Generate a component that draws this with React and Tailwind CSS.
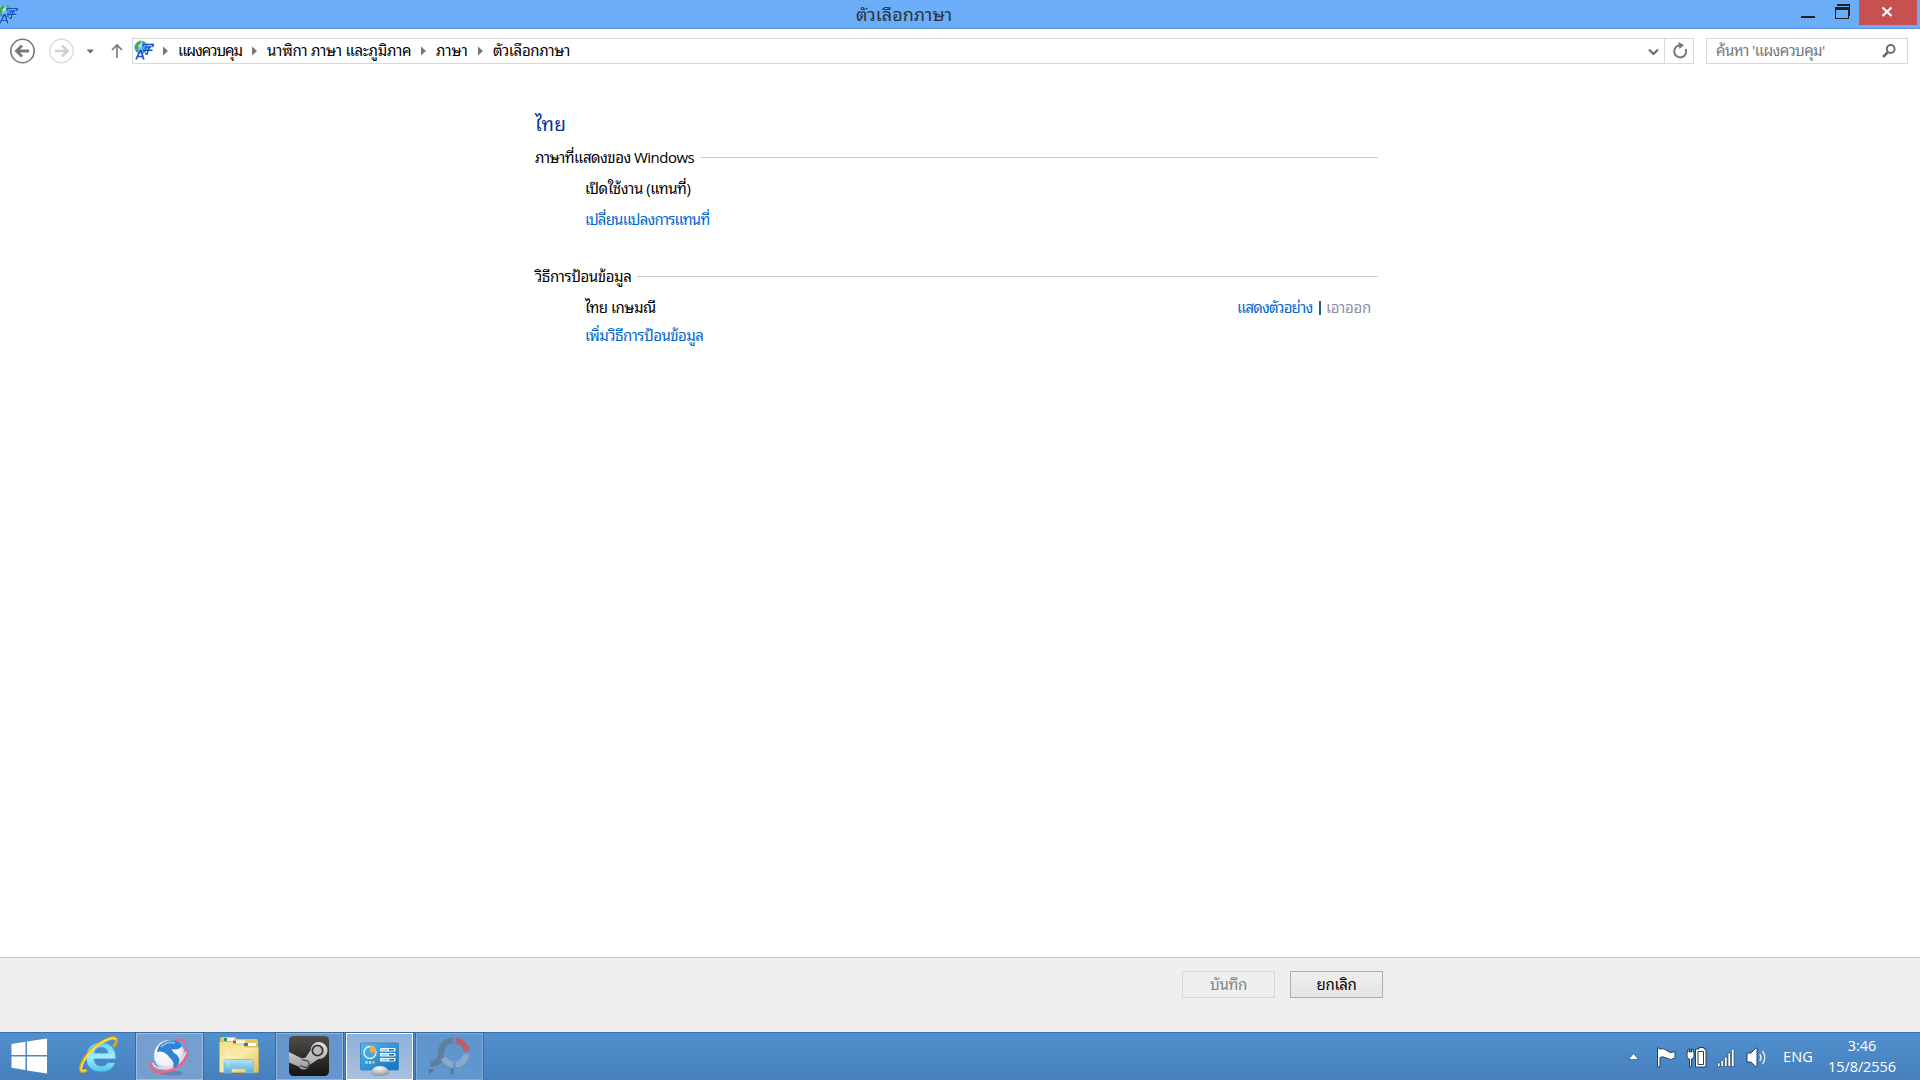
const LanguageIcon = () => (
  <svg viewBox="0 0 20 20" className="h-5 w-5 shrink-0">
    <defs>
      <radialGradient id="globe" cx="35%" cy="30%" r="75%">
        <stop offset="0" stopColor="#e2f9ff" />
        <stop offset="0.5" stopColor="#58b2ea" />
        <stop offset="1" stopColor="#0b4fa8" />
      </radialGradient>
    </defs>
    <circle cx="7" cy="7.2" r="6.6" fill="url(#globe)" />
    <path d="M0.800 7 Q2 2 6 1 L7 3 L4.500 5.500 L4 9 L2 10Z M9 1.200 L12 3 L10.500 4.500 L8 4Z" fill="#3fae45" />
    <g fill="none">
      <path d="M9 7V4.500H19.500L18.500 7 M11 7H16.500L14 9.300 M8.500 10.200H18.500 M14 9.300L13.300 13.500L11 13.300" stroke="#cfe9ff" strokeWidth="2.400" opacity=".5" />
      <path d="M9 7V4.500H19.500L18.500 7 M11 7H16.500L14 9.300 M8.500 10.200H18.500 M14 9.300L13.300 14L11 13.800" stroke="#1650cc" strokeWidth="1.400" />
      <path d="M2 19.500L6.200 10.500H7L9.800 19.500 M3.800 16.500H9" stroke="#e8f6ff" strokeWidth="2.800" opacity=".5" />
      <path d="M2 19.500L6.200 10.500H7L9.800 19.500 M3.800 16.500H9" stroke="#1554d1" strokeWidth="1.700" />
    </g>
  </svg>
);

const TitleBar = () => (
  <header className="flex h-[29px] items-start border-b border-[#5a91d6] bg-[#6badf6]">
    <div className="-ml-0.5 w-[858px] pt-[4px]">
      <LanguageIcon />
    </div>
    <h1 className="w-[96px] whitespace-nowrap pt-[2px] text-[18px] leading-6 text-[#2b3442]">ตัวเลือกภาษา</h1>
    <div className="ml-auto flex pr-[3px]">
      <svg className="h-7 w-[58px]" viewBox="0 0 58 28" shapeRendering="crispEdges">
        <rect y="16" width="14" height="2" fill="#222" />
        <path d="M36 4H49V16H48V6H36Z M34 7H48V19H34Z M35 10V18H47V10Z" fill="#222" fillRule="evenodd" />
      </svg>
      <button className="flex h-[25px] w-[58px] items-center justify-center bg-[#c75050] pr-[2px] pb-[2px]">
        <svg className="h-3 w-3" viewBox="0 0 12 12">
          <path d="M1.5 1.5L10.5 10M10.5 1.5L1.5 10" stroke="#fff" strokeWidth="2.2" />
        </svg>
      </button>
    </div>
  </header>
);

const Crumb = ({ label, className }) => (
  <>
    <svg className="h-2.5 w-[6px] shrink-0" viewBox="0 0 6 10">
      <path d="M0 0.5L5 5L0 9.5Z" fill="#777" />
    </svg>
    <span className={`ml-[9px] -mt-[2px] shrink-0 whitespace-nowrap ${className}`}>{label}</span>
  </>
);

const NavBar = () => (
  <nav className="flex h-[43px] items-start pt-[9px] text-[15px] leading-[24px]">
    <svg className="h-[26px] w-[132px] shrink-0" viewBox="0 0 132 26" fill="none">
      <circle cx="22.5" cy="13" r="11.7" stroke="#7a7a7a" strokeWidth="1.6" />
      <path d="M29 13H17M22 7.5L16.5 13L22 18.5" stroke="#7a7a7a" strokeWidth="2.8" />
      <circle cx="61.5" cy="13" r="11.7" stroke="#dadada" strokeWidth="1.4" />
      <path d="M55 13H67M62 7.5L67.5 13L62 18.5" stroke="#d0d0d0" strokeWidth="2.6" />
      <path d="M86.500 11.500H94L90.250 15.500Z" fill="#6d6d6d" />
      <path d="M117 20V7M112 12L117 7L122 12" stroke="#777" strokeWidth="1.6" />
    </svg>
    <div className="flex h-[26px] w-[1562px] items-center border border-[#d9d9d9] pl-[1px]">
      <div className="-mt-[3px]">
        <LanguageIcon />
      </div>
      <div className="ml-[9px] flex items-center">
        <Crumb label="แผงควบคุม" className="w-[74px] tracking-[-1px]" />
        <Crumb label="นาฬิกา ภาษา และภูมิภาค" className="w-[154px] tracking-[-0.26px]" />
        <Crumb label="ภาษา" className="w-[42px]" />
        <Crumb label="ตัวเลือกภาษา" className="w-[80px] tracking-[-0.3px]" />
      </div>
      <svg className="ml-auto h-[24px] w-[46px]" viewBox="0 0 46 24" fill="none">
        <path d="M2 10.500L6.500 15L11 10.500" stroke="#666" strokeWidth="2" />
        <path d="M17.500 0V24" stroke="#d9d9d9" />
        <path d="M32 6.500A6 6 0 1 0 38.700 10" stroke="#777" strokeWidth="2" />
        <path d="M31 3L37 6L32.500 10Z" fill="#777" />
      </svg>
    </div>
    <div className="ml-3 flex h-[26px] w-[202px] items-center border border-[#d9d9d9] pl-[9px] pr-[11px] text-[#767676]">
      <span className="-mt-[2px] whitespace-nowrap tracking-[-0.6px]">ค้นหา 'แผงควบคุม'</span>
      <svg className="ml-auto h-[14px] w-[14px]" viewBox="0 0 14 14" fill="none" stroke="#6d6d6d">
        <circle cx="8.700" cy="5" r="3.900" strokeWidth="2" />
        <path d="M6 8L1 13" strokeWidth="2.500" />
      </svg>
    </div>
  </nav>
);

const SectionHeading = ({ label, className }) => (
  <div className="flex h-6 items-center">
    <h3 className={`shrink-0 whitespace-nowrap ${className}`}>{label}</h3>
    <div className="h-px flex-1 bg-[#cacaca]" />
  </div>
);

const Content = () => (
  <main className="h-[885px] pl-[535px] pt-[40px] text-[15px] leading-6">
    <div className="w-[843px]">
      <h2 className="h-[33px] text-[19px] tracking-[0.2px] text-[#003399]">ไทย</h2>
      <SectionHeading label="ภาษาที่แสดงของ Windows" className="w-[165px] tracking-[-0.52px]" />
      <p className="mt-[7px] h-6 whitespace-nowrap pl-[50px] tracking-[-0.45px]">เปิดใช้งาน (แทนที่)</p>
      <a className="mt-[7px] block h-6 whitespace-nowrap pl-[50px] tracking-[-0.8px] text-[#0066cc]">เปลี่ยนแปลงการแทนที่</a>
      <div className="mt-[33px]">
        <SectionHeading label="วิธีการป้อนข้อมูล" className="w-[102px] tracking-[-0.4px]" />
      </div>
      <div className="mt-[7px] flex h-6 whitespace-nowrap pl-[50px] pr-[7px]">
        <span className="tracking-[-0.5px]">ไทย เกษมณี</span>
        <a className="ml-auto w-[82px] tracking-[-0.85px] text-[#0066cc]">แสดงตัวอย่าง</a>
        <span className="mt-[6px] h-[14px] w-[2px] bg-[#1a5f9e]" />
        <span className="ml-[5px] w-[45px] tracking-[-0.3px] text-[#8a8fa8]">เอาออก</span>
      </div>
      <a className="mt-1 block h-6 whitespace-nowrap pl-[50px] tracking-[-0.5px] text-[#0066cc]">เพิ่มวิธีการป้อนข้อมูล</a>
    </div>
  </main>
);

const Footer = () => (
  <footer className="flex h-[75px] items-start gap-[15px] border-t border-[#cacaca] bg-[#efefef] pl-[1182px] pt-[13px] text-[15px] leading-6">
    <button className="h-[27px] w-[93px] border border-[#d9d9d9] pb-[2px] tracking-[-0.3px] text-[#838383]">บันทึก</button>
    <button className="h-[27px] w-[93px] border border-[#acacac] bg-linear-to-b from-[#efefef] to-[#e4e4e4] pb-[2px] tracking-[-0.3px] text-black">
      ยกเลิก
    </button>
  </footer>
);

/* Taskbar icons */

const StartIcon = () => (
  <svg className="h-[46px] w-[60px]" viewBox="0 0 60 46" fill="#fff">
    <path d="M11.500 11L25.500 8.800V22H11.500Z M27 8.500L47 5.500V22H27Z M11.500 23.500H25.500V37L11.500 34.800Z M27 23.500H47V40.500L27 37.400Z" />
  </svg>
);

const ExplorerEIcon = () => (
  <svg className="h-[46px] w-[76px]" viewBox="0 0 76 46" fill="none">
    <defs>
      <linearGradient id="ie" x1="0" y1="0" x2="0" y2="1">
        <stop offset="0" stopColor="#5fd0f4" />
        <stop offset="0.5" stopColor="#a4ecfc" />
        <stop offset="1" stopColor="#4cc3ee" />
      </linearGradient>
    </defs>
    <path
      d="M56 26H34Q34.500 33 41.500 33Q46 33 48 29.500H55.500Q52 39 41 39Q26 38.500 26 24Q27 9.500 41 9Q56 10 56 26Z M34.500 20H48Q47 14.500 41.300 14.500Q35.500 14.500 34.500 20Z"
      fill="url(#ie)"
      stroke="#2f95ce"
      strokeWidth=".7"
      fillRule="evenodd"
    />
    <path d="M27 37Q18 42 21.500 31Q27 18 41 9.500Q56 1 56.500 7Q56.500 10 53.500 14" stroke="#d9a514" strokeWidth="3" />
    <path d="M26 37Q19 40 22.500 31Q28 18 41 10Q55 2.500 55.500 7" stroke="#ffe04a" strokeWidth="1.800" />
  </svg>
);

const SwirlIcon = () => (
  <svg className="h-[44px] w-[44px]" viewBox="0 0 44 44" fill="none">
    <defs>
      <radialGradient id="ball" cx="40%" cy="35%" r="65%">
        <stop offset="0" stopColor="#fff" />
        <stop offset="0.7" stopColor="#eef1f7" />
        <stop offset="1" stopColor="#aab4ca" />
      </radialGradient>
    </defs>
    <ellipse cx="23" cy="38" rx="12" ry="2.500" fill="#40618c" opacity=".4" />
    <path d="M27 5Q37 3 37 8" stroke="#f2618b" strokeWidth="2" />
    <circle cx="21.500" cy="20.500" r="15.500" fill="url(#ball)" />
    <path d="M37 12Q41 17 36 26Q29 36 15 37Q1 38 3 27" stroke="#f2618b" strokeWidth="2.600" />
    <path d="M38 17Q32 32 16 33.500Q7 34 4.500 28" stroke="#fbd3df" strokeWidth="1.500" />
    <path d="M9 17Q10 8 20 5.500Q31 4 34 11Q30 16 24 14Q24 17 29 20Q33 24 30 30Q28 33 25 33Q27 27 22 23Q16 15 9 17Z" fill="#3184d2" />
    <path d="M13 12Q18 6 27 8" stroke="#79bdf0" strokeWidth="2" />
  </svg>
);

const FolderIcon = () => (
  <svg className="h-[46px] w-[73px]" viewBox="0 0 73 46">
    <defs>
      <linearGradient id="folder" x1="0" y1="0" x2="1" y2="1">
        <stop offset="0" stopColor="#f4df8c" />
        <stop offset="0.5" stopColor="#f9eaa8" />
        <stop offset="1" stopColor="#e3bd55" />
      </linearGradient>
      <linearGradient id="tray" x1="0" y1="0" x2="0" y2="1">
        <stop offset="0" stopColor="#b6e3f2" />
        <stop offset="1" stopColor="#53aede" />
      </linearGradient>
    </defs>
    <path d="M17 6Q17 4 19 4H32L34 6H53Q55 6 55 8V34H17Z" fill="#e6c865" />
    <path d="M17 8.500H30L32 11H40L42 14H55.500V38Q55.500 39.500 54 39.500H18Q16.500 39.500 16.500 38V9Z" fill="url(#folder)" stroke="#d5ae47" strokeWidth=".7" />
    <path d="M21 5H31V8H21Z M30 7.500H42V10.500H30Z M41 10H53V13H41Z" fill="#fff" />
    <path d="M21 5H24V8H21Z" fill="#2b9a44" />
    <path d="M30 7.500H33V10.500H30Z" fill="#d74632" />
    <path d="M41 10H45V13H41Z" fill="#2c80c4" />
    <path d="M21 40V29Q21 26.500 23.500 26.500H48Q50.500 26.500 50.500 29V40H43V35.500H28.500V40Z" fill="url(#tray)" stroke="#78bbd8" strokeWidth=".8" />
    <path d="M25 14V34M17 24H34M20 18L31 30M31 18L20 30" stroke="#fff" strokeWidth=".7" opacity=".5" />
  </svg>
);

const SteamIcon = () => (
  <svg className="-ml-[1px] -mt-[1px] h-[40px] w-[40px]" viewBox="0 0 40 40">
    <defs>
      <linearGradient id="steam" x1="0" y1="0" x2="0" y2="1">
        <stop offset="0" stopColor="#504c49" />
        <stop offset="1" stopColor="#151515" />
      </linearGradient>
      <linearGradient id="arm" x1="0" y1="0" x2="0" y2="1">
        <stop offset="0" stopColor="#e4e4e4" />
        <stop offset="1" stopColor="#999" />
      </linearGradient>
    </defs>
    <rect width="40" height="40" rx="4.500" fill="url(#steam)" />
    <path d="M0 16L13 22.500Q15 21.500 16.500 21.800L21.500 14.500A8.500 8.500 0 1 1 29.500 23L20.500 29A6 6 0 0 1 9.500 30.500L0 26.500Z" fill="url(#arm)" />
    <circle cx="28.500" cy="14.500" r="5.200" fill="#bbb" stroke="#333" strokeWidth="1.800" />
    <path d="M11 29.500L15 31A3.500 3.500 0 1 0 16 24.500L13 23.500" fill="none" stroke="#444" strokeWidth="1.300" />
  </svg>
);

const ControlPanelIcon = () => (
  <svg className="h-[44px] w-[44px]" viewBox="0 0 44 44">
    <defs>
      <linearGradient id="cp" x1="0" y1="0" x2="1" y2="1">
        <stop offset="0" stopColor="#59b8ed" />
        <stop offset="1" stopColor="#1370bb" />
      </linearGradient>
      <radialGradient id="base" cx="45%" cy="20%" r="80%">
        <stop offset="0" stopColor="#fff" />
        <stop offset="1" stopColor="#8c929a" />
      </radialGradient>
    </defs>
    <rect x="2.500" y="8" width="38" height="27" rx="1" fill="url(#cp)" stroke="#3a8bc5" />
    <circle cx="12" cy="17.500" r="6" fill="#48a8e4" stroke="#e8f8ff" strokeWidth="1.300" />
    <path d="M12 17.500V11A6.500 6.500 0 0 1 18.500 17.500Z" fill="#f8ab45" />
    {[13, 18, 23].map((y) => (
      <g key={y}>
        <rect x="22" y={y} width="15.500" height="3.600" rx=".8" fill="#e9f7ff" />
        <rect x="23.500" y={y + 1} width="6" height="1.600" fill="#8fd0f2" />
        <rect x="31" y={y + 1} width="5" height="1.600" fill="#1775c5" />
      </g>
    ))}
    <circle cx="8.500" cy="27.500" r="1.400" fill="#7ff1ff" />
    <circle cx="12" cy="27.500" r="1.400" fill="#7ff1ff" />
    <circle cx="15.500" cy="27.500" r="1.400" fill="#f8ab45" />
    <path d="M13 38Q14 31 22 31Q30 31 31 38Q30 41 22 41Q14 41 13 38Z" fill="url(#base)" />
  </svg>
);

const PhotoScapeIcon = () => (
  <div className="flex w-[40px] flex-col items-center">
    <svg className="h-[32px] w-[40px]" viewBox="0 0 40 32" fill="none">
      <path d="M0 28Q11 28 11 17Q12 5 23 4.500" stroke="#5f7f9f" strokeWidth="6" />
      <path d="M25.500 4.500A12 12 0 0 1 36.500 15.500" stroke="#bd5f6b" strokeWidth="6" />
      <path d="M36.500 18A12 12 0 0 1 25.500 28.500M23 28.500Q17 27.500 13.500 22" stroke="#8ba9c8" strokeWidth="6" />
    </svg>
    <span className="whitespace-nowrap font-['Roboto',sans-serif] text-[7px] font-bold leading-[9px] tracking-[-0.4px] text-[#7c98b5]">
      <b className="text-[#4f6f90]">P</b>HOTO<b className="text-[#4f6f90]">S</b>CAPE
    </span>
  </div>
);

const TaskButton = ({ className, children }) => (
  <div className={`flex h-[47px] w-[67px] shrink-0 items-center justify-center border shadow-[0_0_0_1px_#396a9c] ${className}`}>
    {children}
  </div>
);

const TrayIcons = () => (
  <svg className="h-[47px] w-[160px]" viewBox="0 0 160 47" fill="#fff" stroke="#233f60" strokeWidth="1">
    <path d="M8.500 26.500L13.500 20.500L18.500 26.500Z" strokeWidth=".6" />
    <path d="M37.500 15H39.500V16Q44.500 14.500 47.500 18Q50.500 21 55 18.500V25Q50.500 28 46.500 25Q42.500 23 40 24.500V34H37.500Z" />
    <path d="M68 16H69.500V19H71.500V16H73V19H74V24Q73 26 71.500 26V34H69.500V26Q68 26 67 24V19H68Z" />
    <path d="M77 16H79V14.500H84V16H86V34H75.500V16Z" />
    <path d="M78 18.500H83.500V31.500H78Z" fill="none" />
    <path d="M97.500 30H100V33.500H97.500Z M101 27.500H103.500V33.500H101Z M104.500 24H107V33.500H104.500Z M108 20H110.500V33.500H108Z M111.500 16H114V33.500H111.500Z" strokeWidth=".6" />
    <path d="M127 20H131L136 15H137V34H136L131 29H127Z" />
    <path d="M140 21Q142 24.500 140 28M142.500 18Q147 24.500 142.500 31" fill="none" stroke="#d9e8f8" strokeWidth="1.500" />
  </svg>
);

const Taskbar = () => (
  <div className="flex h-[48px] border-t border-[#3f6fa6] bg-linear-to-b from-[#5190ce] to-[#467fbe]">
    <StartIcon />
    <ExplorerEIcon />
    <TaskButton className="border-[#9fbddd] bg-[#759fce]">
      <SwirlIcon />
    </TaskButton>
    <FolderIcon />
    <TaskButton className="border-[#8fb5dc] bg-[#6496cb]">
      <SteamIcon />
    </TaskButton>
    <TaskButton className="ml-[3px] border-white bg-linear-to-b from-[#8fb0d8] to-[#a8c1df]">
      <ControlPanelIcon />
    </TaskButton>
    <TaskButton className="ml-[3px] border-[#7fabd8] bg-[#5f96cd]">
      <PhotoScapeIcon />
    </TaskButton>
    <div className="ml-auto flex text-white">
      <TrayIcons />
      <span className="ml-[3px] flex w-[30px] items-center text-[14.5px] tracking-[0.1px]">ENG</span>
      <div className="ml-[14px] flex w-[93px] flex-col items-center pr-[23px] pt-[2px] text-[14.5px] leading-[21px] tracking-[-0.1px]">
        <span>3:46</span>
        <span>15/8/2556</span>
      </div>
    </div>
  </div>
);

export default function App() {
  return (
    <div className="flex h-[1080px] w-[1920px] flex-col overflow-hidden bg-white font-['Open_Sans','Noto_Sans_Thai_Looped','Noto_Looped_Thai','Loma','Noto_Sans_Thai','Noto_Sans',sans-serif] text-black">
      <TitleBar />
      <NavBar />
      <Content />
      <Footer />
      <Taskbar />
    </div>
  );
}
